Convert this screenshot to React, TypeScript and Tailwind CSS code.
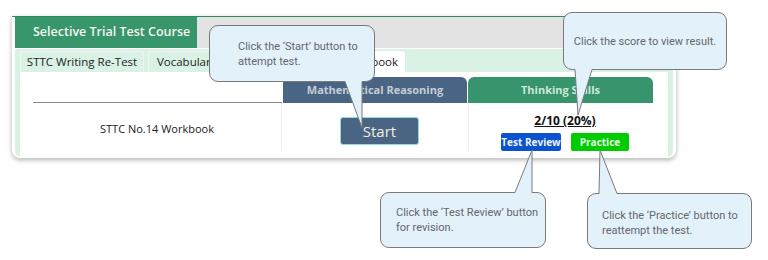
const tails = [
  { bl: [345, 81.5], br: [362, 81.5], tip: [362, 128], dir: -1 },
  { bl: [575, 69.5], br: [592, 69.5], tip: [578, 115], dir: -1 },
  { bl: [515, 192.5], br: [532, 192.5], tip: [532, 150], dir: 1 },
  { bl: [599, 193.5], br: [617, 193.5], tip: [600, 150], dir: 1 },
];

const Callout = ({ className, children }: { className: string; children: React.ReactNode }) => (
  <div
    className={`absolute flex items-center rounded-[9px] border border-[#7a7a7a] bg-[#e3f1fb] font-['Roboto',sans-serif] text-[11px] leading-[15px] text-[#63676b] ${className}`}>
    <div>{children}</div>
  </div>
);

export default function App() {
  return (
    <div className="relative h-[260px] w-[768px] overflow-hidden bg-white font-['Open_Sans',sans-serif]">
      <div className="pl-[12px] pt-[16px]">
        <div className="w-[664px] rounded-b-[8px] border-t border-[#2f8a5c] bg-white px-[3px] pb-[1px] shadow-[0_2px_5px_rgba(0,0,0,0.3)]">
          {/* course header */}
          <div className="flex h-[31px]">
            <div className="flex w-[182px] items-center bg-[#37966a] pl-[18px] text-[12.5px] font-semibold text-[#f4f4f4]">
              Selective Trial Test Course
            </div>
            <div className="flex-1 bg-[#e3e3e3]" />
          </div>

          <div className="rounded-b-[6px] border-t border-white bg-[#daf2e4] px-[5px] pt-[2px]">
            {/* tabs */}
            <div className="flex h-[21px] gap-[4px] text-[11.5px] text-[#222]">
              <div className="flex w-[124px] items-center justify-center rounded-t-[4px] border border-b-0 border-[#f2f2f2] bg-[#d9f2e3]">
                STTC Writing Re-Test
              </div>
              <div className="flex w-[120px] items-center justify-center rounded-t-[4px] border border-b-0 border-[#f2f2f2] bg-[#d9f2e3]">
                Vocabulary Re-Test
              </div>
              <div className="flex w-[133px] items-center justify-center rounded-t-[4px] border border-b-0 border-white bg-white">
                STTC No.14 Workbook
              </div>
            </div>

            {/* table */}
            <div className="bg-white pb-[6px] pl-[13px] pr-[16px] pt-[5px]">
              <div className="grid h-[26px] grid-cols-[249px_184px_185px] gap-x-[1px] text-[11px] font-bold">
                <div className="border-b border-[#8a8a8a]" />
                <div className="flex items-center justify-center rounded-t-[6px] bg-[#4a6583] text-[#c5cdd8]">
                  Mathematical Reasoning
                </div>
                <div className="flex items-center justify-center rounded-t-[6px] bg-[#38946d] text-[#cce8d9]">
                  Thinking Skills
                </div>
              </div>
              <div className="grid h-[48px] grid-cols-[249px_184px_185px] gap-x-[1px]">
                <div className="flex items-center justify-center border-r border-[#f0f0f0] pt-[4px] text-[11px] text-[#222]">
                  STTC No.14 Workbook
                </div>
                <div className="flex justify-center pl-[9px] pt-[14px]">
                  <button
                    type="button"
                    className="h-[28px] w-[79px] rounded-[3px] border border-[#8fdede] bg-[#4a6583] text-[15px] text-[#eef0e0]">
                    Start
                  </button>
                </div>
                <div className="flex flex-col items-center border-l border-[#f0f0f0] pl-[8px] pt-[10px]">
                  <span className="text-[12px] font-bold leading-[16px] text-[#111] underline">2/10 (20%)</span>
                  <div className="mt-[4px] flex gap-[10px] text-[10px] font-bold text-[#eef4ff]">
                    <button type="button" className="h-[18px] w-[60px] rounded-[2px] bg-[#0b52cf]">
                      Test Review
                    </button>
                    <button type="button" className="h-[18px] w-[58px] rounded-[2px] bg-[#00cc00] text-[#e9ffe9]">
                      Practice
                    </button>
                  </div>
                </div>
              </div>
            </div>
          </div>
        </div>
      </div>

      {/* help callouts */}
      <Callout className="left-[209px] top-[25px] h-[57px] w-[166px] pl-[28px]">
        Click the ‘Start’ button to
        <br />
        attempt test.
      </Callout>
      <Callout className="left-[563px] top-[12px] h-[58px] w-[164px] justify-center">
        Click the score to view result.
      </Callout>
      <Callout className="left-[380px] top-[192px] h-[56px] w-[166px] pl-[15px]">
        Click the ‘Test Review’ button
        <br />
        for revision.
      </Callout>
      <Callout className="left-[587px] top-[193px] h-[56px] w-[165px] pl-[14px] pt-[3px]">
        Click the ‘Practice’ button to
        <br />
        reattempt the test.
      </Callout>

      <svg className="pointer-events-none absolute left-0 top-0" width="768" height="260">
        {tails.map((t, i) => {
          const y2 = t.bl[1] + t.dir * 2;
          return (
            <g key={i}>
              <polygon
                points={`${t.bl[0]},${y2} ${t.br[0]},${y2} ${t.br[0]},${t.br[1]} ${t.tip[0]},${t.tip[1]} ${t.bl[0]},${t.bl[1]}`}
                fill="#e3f1fb"
              />
              <polyline
                points={`${t.bl[0]},${t.bl[1]} ${t.tip[0]},${t.tip[1]} ${t.br[0]},${t.br[1]}`}
                fill="none"
                stroke="#7a7a7a"
                strokeWidth="1"
              />
            </g>
          );
        })}
      </svg>
    </div>
  );
}
